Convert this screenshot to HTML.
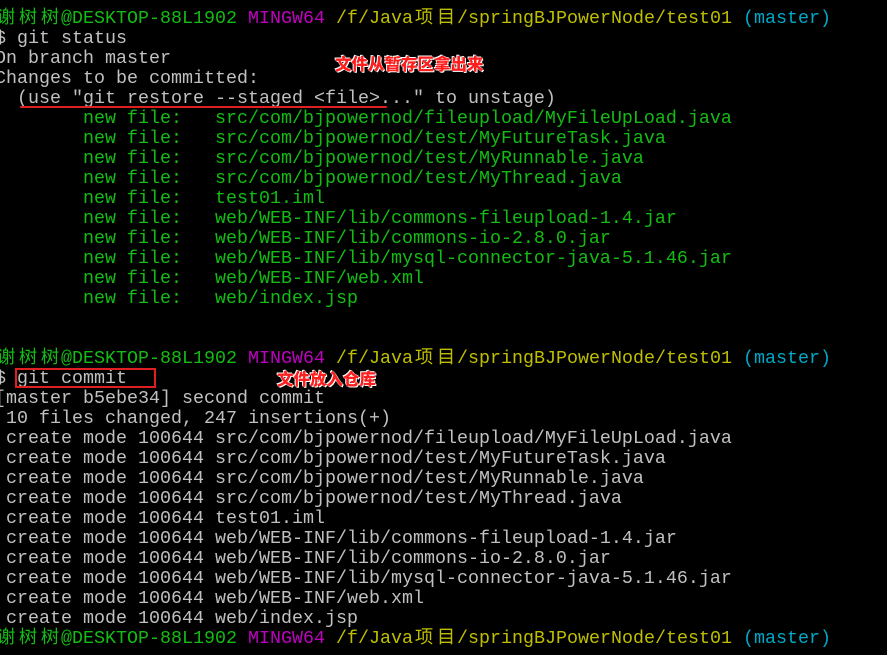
<!DOCTYPE html>
<html><head><meta charset="utf-8"><style>
html,body{margin:0;padding:0;background:#000;width:887px;height:655px;overflow:hidden}
#t{position:absolute;left:-5px;top:9px;font-family:"Liberation Mono","Noto Sans CJK SC",monospace;font-size:18.33px;line-height:20px;color:#c0c0c0;white-space:normal}
.l{height:20px;white-space:pre}
.c{display:inline-block;width:22px;text-align:center}
.g{color:#13bc13}.m{color:#bf00bf}.y{color:#bfbf00}.cy{color:#00a8c8}
.ann{position:absolute;font-family:"Noto Sans CJK SC",sans-serif;font-weight:900;color:#ff1e1e;font-size:16.5px;line-height:18px;white-space:nowrap;text-shadow:0 0 1px #fff,0 0 1px #fff,1px 1px 0 #fff,-1px -1px 0 #fff}
</style></head><body>
<div id="t"><div class="l"><span class="g"><span class="c">谢</span><span class="c">树</span><span class="c">树</span>@DESKTOP-88L1902</span> <span class="m">MINGW64</span> <span class="y">/f/Java<span class="c">项</span><span class="c">目</span>/springBJPowerNode/test01</span> <span class="cy">(master)</span></div><div class="l">$ git status</div><div class="l">On branch master</div><div class="l">Changes to be committed:</div><div class="l">  (use "git restore --staged &lt;file&gt;..." to unstage)</div><div class="l g">        new file:   src/com/bjpowernod/fileupload/MyFileUpLoad.java</div><div class="l g">        new file:   src/com/bjpowernod/test/MyFutureTask.java</div><div class="l g">        new file:   src/com/bjpowernod/test/MyRunnable.java</div><div class="l g">        new file:   src/com/bjpowernod/test/MyThread.java</div><div class="l g">        new file:   test01.iml</div><div class="l g">        new file:   web/WEB-INF/lib/commons-fileupload-1.4.jar</div><div class="l g">        new file:   web/WEB-INF/lib/commons-io-2.8.0.jar</div><div class="l g">        new file:   web/WEB-INF/lib/mysql-connector-java-5.1.46.jar</div><div class="l g">        new file:   web/WEB-INF/web.xml</div><div class="l g">        new file:   web/index.jsp</div><div class="l"> </div><div class="l"> </div><div class="l"><span class="g"><span class="c">谢</span><span class="c">树</span><span class="c">树</span>@DESKTOP-88L1902</span> <span class="m">MINGW64</span> <span class="y">/f/Java<span class="c">项</span><span class="c">目</span>/springBJPowerNode/test01</span> <span class="cy">(master)</span></div><div class="l">$ git commit</div><div class="l">[master b5ebe34] second commit</div><div class="l"> 10 files changed, 247 insertions(+)</div><div class="l"> create mode 100644 src/com/bjpowernod/fileupload/MyFileUpLoad.java</div><div class="l"> create mode 100644 src/com/bjpowernod/test/MyFutureTask.java</div><div class="l"> create mode 100644 src/com/bjpowernod/test/MyRunnable.java</div><div class="l"> create mode 100644 src/com/bjpowernod/test/MyThread.java</div><div class="l"> create mode 100644 test01.iml</div><div class="l"> create mode 100644 web/WEB-INF/lib/commons-fileupload-1.4.jar</div><div class="l"> create mode 100644 web/WEB-INF/lib/commons-io-2.8.0.jar</div><div class="l"> create mode 100644 web/WEB-INF/lib/mysql-connector-java-5.1.46.jar</div><div class="l"> create mode 100644 web/WEB-INF/web.xml</div><div class="l"> create mode 100644 web/index.jsp</div><div class="l"><span class="g"><span class="c">谢</span><span class="c">树</span><span class="c">树</span>@DESKTOP-88L1902</span> <span class="m">MINGW64</span> <span class="y">/f/Java<span class="c">项</span><span class="c">目</span>/springBJPowerNode/test01</span> <span class="cy">(master)</span></div></div>
<div class="ann" style="left:335px;top:54px">文件从暂存区拿出来</div>
<div class="ann" style="left:277px;top:369px">文件放入仓库</div>
<div style="position:absolute;left:20px;top:106px;width:367px;height:2px;background:#e02020;border-radius:1px"></div>
<div style="position:absolute;left:15px;top:368px;width:137px;height:16px;border:2px solid #e02020"></div>
</body></html>
